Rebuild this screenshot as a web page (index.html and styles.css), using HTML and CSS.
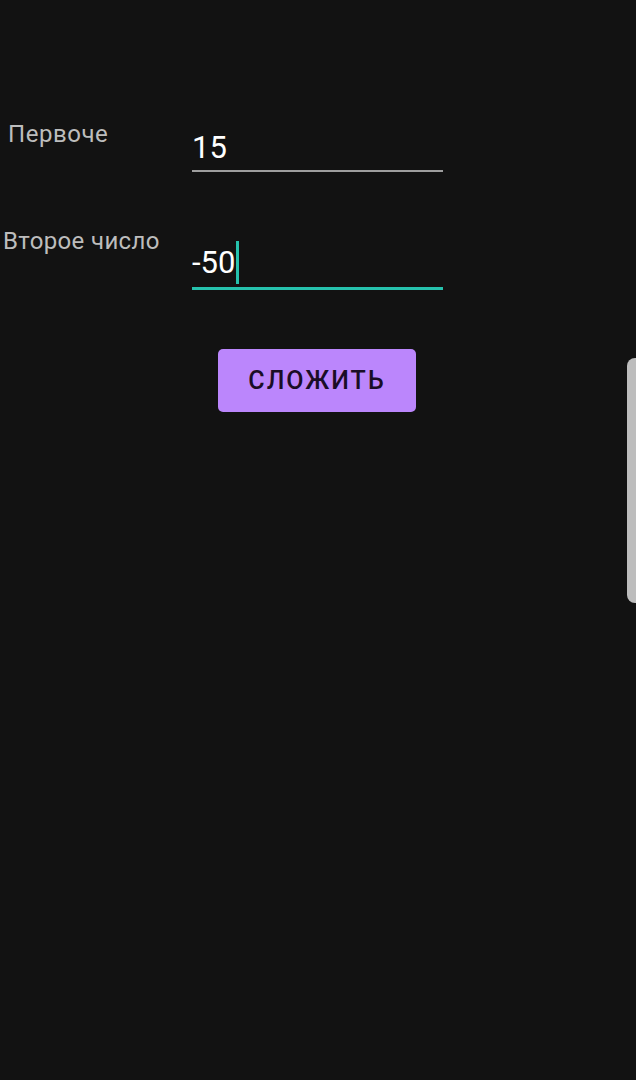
FILE: index.html
```html
<!DOCTYPE html>
<html lang="ru">
<head>
<meta charset="utf-8">
<link rel="stylesheet" href="styles.css">
</head>
<body>
<main class="screen">
  <div class="row row-first">
    <div class="label label-first">Первоче</div>
    <div class="field">
      <span class="value">15</span>
    </div>
  </div>
  <div class="row row-second">
    <div class="label label-second">Второе число</div>
    <div class="field field-focused">
      <span class="value">-50</span><span class="cursor"></span>
    </div>
  </div>
  <div class="actions">
    <button class="btn">СЛОЖИТЬ</button>
  </div>
  <div class="edge-handle"></div>
</main>
</body>
</html>
```
FILE: styles.css
```css
html, body {
  margin: 0;
  padding: 0;
  background: #121212;
}
.screen {
  position: relative;
  width: 636px;
  height: 1080px;
  background: #121212;
  font-family: Roboto, "Noto Sans", sans-serif;
  overflow: hidden;
}
.row {
  display: grid;
  grid-template-columns: 192px 251px;
  align-items: start;
}
.row-first {
  padding-top: 118px;
}
.row-second {
  padding-top: 58px;
}
.label {
  color: #bdbdbd;
  font-size: 24px;
  line-height: 28px;
  letter-spacing: 0.35px;
  white-space: nowrap;
}
.label-first {
  padding-left: 8px;
  padding-top: 2px;
  letter-spacing: 0.55px;
}
.label-second {
  padding-left: 3px;
  margin-top: -3px;
}
.field {
  display: flex;
  align-items: center;
  box-sizing: border-box;
  color: #ffffff;
  font-size: 31px;
}
.row-first .field {
  height: 54px;
  padding-top: 7px;
  border-bottom: 2px solid #9e9e9e;
}
.field-focused {
  border-bottom: 3px solid #26c2ad;
  height: 60px;
  padding-top: 8px;
}
.value {
  line-height: 36px;
}
.cursor {
  display: inline-block;
  width: 3px;
  height: 43px;
  background: #26c2ad;
  margin-left: 1px;
}
.actions {
  display: flex;
  justify-content: flex-start;
  padding-left: 218px;
  padding-top: 59px;
}
.btn {
  width: 198px;
  height: 63px;
  border: none;
  border-radius: 5px;
  background: #bb86fc;
  color: #1a0d26;
  font-family: Roboto, "Noto Sans", sans-serif;
  font-size: 25px;
  font-weight: 500;
  letter-spacing: 2px;
  padding: 0;
}
.edge-handle {
  position: absolute;
  left: 627px;
  top: 358px;
  width: 12px;
  height: 245px;
  background: #bdbdbd;
  border-radius: 8px 0 0 8px;
}
```
